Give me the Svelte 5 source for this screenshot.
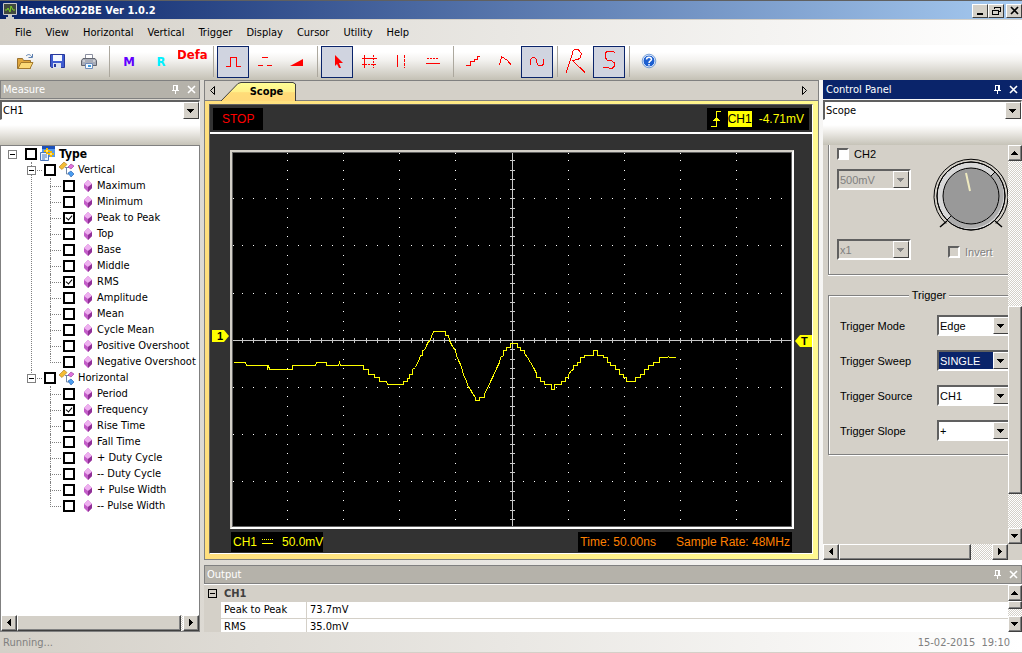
<script>
    let channel = $state("CH1");
    let panel = $state("Scope");

    const menus = ["File", "View", "Horizontal", "Vertical", "Trigger", "Display", "Cursor", "Utility", "Help"];

    const tools = [
        {id: "open"}, {id: "save"}, {id: "print"}, {id: "sep"},
        {id: "math"}, {id: "ref"}, {id: "default"}, {id: "sep"},
        {id: "pulse", active: true}, {id: "dash"}, {id: "ramp"}, {id: "sep"},
        {id: "arrow", active: true}, {id: "cross"}, {id: "vert"}, {id: "horz"}, {id: "sep"},
        {id: "step"}, {id: "linear"}, {id: "sine", active: true}, {id: "sep"},
        {id: "run"}, {id: "single", active: true}, {id: "sep"},
        {id: "help"}
    ];

    let groups = $state([
        {
            name: "Vertical",
            items: [
                {name: "Maximum", on: false},
                {name: "Minimum", on: false},
                {name: "Peak to Peak", on: true},
                {name: "Top", on: false},
                {name: "Base", on: false},
                {name: "Middle", on: false},
                {name: "RMS", on: true},
                {name: "Amplitude", on: false},
                {name: "Mean", on: false},
                {name: "Cycle Mean", on: false},
                {name: "Positive Overshoot", on: false},
                {name: "Negative Overshoot", on: false}
            ]
        },
        {
            name: "Horizontal",
            items: [
                {name: "Period", on: false},
                {name: "Frequency", on: true},
                {name: "Rise Time", on: false},
                {name: "Fall Time", on: false},
                {name: "+ Duty Cycle", on: false},
                {name: "-- Duty Cycle", on: false},
                {name: "+ Pulse Width", on: false},
                {name: "-- Pulse Width", on: false}
            ]
        }
    ]);

    const triggers = [
        {id: "mode", label: "Trigger Mode", value: "Edge"},
        {id: "sweep", label: "Trigger Sweep", value: "SINGLE", focus: true},
        {id: "source", label: "Trigger Source", value: "CH1"},
        {id: "slope", label: "Trigger Slope", value: "+"}
    ];

    const results = [
        ["Peak to Peak", "73.7mV"],
        ["RMS", "35.0mV"]
    ];

    // graticule: 10 x 8 divisions, 5 ticks each
    const gx = (k) => Math.round(11.22 * k - 1);
    const gy = (k) => Math.round(9.44 * k - 1);

    function buildDots(){
        let d = "";
        for(let c = 5; c < 50; c += 5){
            for(let k = 0; k < 40; k++){
                d += `M${gx(c)} ${Math.max(gy(k), 1)}h1v1h-1z`;
            }
        }
        for(let r = 5; r < 40; r += 5){
            for(let k = 0; k < 50; k++){
                d += `M${Math.max(gx(k), 1)} ${gy(r)}h1v1h-1z`;
            }
        }
        return d;
    }

    function buildAxes(){
        let d = `M1 ${gy(20)}h558v1h-558zM${gx(25)} 1h1v373h-1z`;
        for(let k = 1; k < 50; k++){
            d += `M${gx(k)} ${gy(20) - 2}h1v5h-1z`;
        }
        for(let k = 1; k < 40; k++){
            d += `M${gx(25) - 2} ${gy(k)}h5v1h-5z`;
        }
        return d;
    }

    const dots = buildDots();
    const axes = buildAxes();

    const wave = "1,210 13,210 14,213 35,213 35,217 36,213 37,217 60,217 60,213 83,213 84,210 94,210 94,213 106,213 107,210 108,213 131,213 131,217 "
        + "136,217 136,222 142,222 142,225 147,225 147,229 154,229 155,232 171,232 171,229 175,229 175,226 177,226 177,222 180,222 180,217 "
        + "183,215 185,210 187,207 188,203 190,203 190,198 193,197 194,193 196,189 198,188 199,184 201,179 213,179 213,183 216,183 "
        + "217,188 220,194 223,198 224,203 226,208 228,212 230,218 231,223 234,228 235,233 238,237 240,241 243,245 243,248 247,248 "
        + "247,245 252,245 252,241 255,236 258,229 261,223 264,216 267,210 268,205 271,203 271,198 274,198 274,195 278,195 278,191 "
        + "285,191 285,195 288,195 288,198 292,198 292,201 295,205 298,210 301,215 304,221 304,225 308,225 308,229 312,229 312,232 "
        + "319,232 319,237 322,237 322,232 329,232 329,229 333,229 333,225 336,225 336,222 339,218 341,217 341,213 345,213 345,210 "
        + "348,210 348,205 352,205 352,203 361,203 361,198 365,198 365,203 371,203 371,205 375,205 375,210 378,210 378,213 383,213 "
        + "383,217 387,217 387,222 391,222 391,225 394,225 394,229 403,229 403,225 408,225 408,222 412,222 412,217 416,217 416,213 "
        + "421,213 421,210 427,210 427,205 435,205 436,204 437,205 443,205";
</script>

{#snippet arrow(dir)}
    <svg class="tri" width="8" height="8" viewBox="0 0 8 8" shape-rendering="crispEdges">
        {#if dir === "up"}<path d="M0 6h7v-1h-1v-1h-1v-1h-1v-1h-1v1h-1v1h-1v1h-1z"/>
        {:else if dir === "down"}<path d="M0 2h7v1h-1v1h-1v1h-1v1h-1v-1h-1v-1h-1v-1h-1z"/>
        {:else if dir === "left"}<path d="M6 0v7h-1v-1h-1v-1h-1v-1h-1v-1h1v-1h1v-1h1v-1z"/>
        {:else}<path d="M2 0v7h1v-1h1v-1h1v-1h1v-1h-1v-1h-1v-1h-1v-1z"/>{/if}
    </svg>
{/snippet}

{#snippet paneButtons()}
    <button class="pane-btn" aria-label="Pin">
        <svg width="9" height="9" viewBox="0 0 9 9" fill="currentColor" shape-rendering="crispEdges"><path d="M2 0h5v5h1v1h-3v3h-1v-3h-3v-1h1zM3 1v4h2v-4z" fill-rule="evenodd"/></svg>
    </button>
    <button class="pane-btn" aria-label="Close">
        <svg width="9" height="9" viewBox="0 0 9 9" stroke="currentColor" stroke-width="1.6"><path d="M1 1l7 7M8 1l-7 7"/></svg>
    </button>
{/snippet}

{#snippet icon(id)}
    <svg width="32" height="32" viewBox="0 0 32 32" fill="none" stroke="#f00">
        {#if id === "open"}
            <path d="M8.500 12.500h5l1 2h7v8h-13z" fill="#e0a63c" stroke="#9a7230"/>
            <path d="M9 22.500l3-6h12l-3 6z" fill="#fbd977" stroke="#a57a2c"/>
            <path d="M17 10c2-2 4-2 6 1M23.500 8v3.500h-4" stroke="#5b7fb0"/>
        {:else if id === "save"}
            <path d="M9.500 8.500h14v13h-13l-1-1z" fill="#3f5cd0" stroke="#27379a"/>
            <path d="M12 9h9v6h-9z" fill="#f4f8ff" stroke="none"/>
            <path d="M12 17h8v5h-8z" fill="#dce2ee" stroke="none"/>
            <path d="M13 18h2v3h-2z" fill="#27379a" stroke="none"/>
        {:else if id === "print"}
            <path d="M12.500 8.500h7v5h-7z" fill="#fff" stroke="#8a8fa0"/>
            <path d="M10 12.500h12l1.500 2v5h-15v-5z" fill="#a9adb8" stroke="#62656f"/>
            <path d="M10 15h2M20 15h2" stroke="#eee"/>
            <path d="M12.500 17.500h7v5h-7z" fill="#f4faff" stroke="#708cb8"/>
            <path d="M15 19h3v2h-3z" fill="#3f9be0" stroke="none"/>
        {:else if id === "pulse"}
            <path d="M9 20.500H13.500V11.500H19.500V20.500H24" shape-rendering="crispEdges"/>
        {:else if id === "dash"}
            <path d="M9 19.500h5M13 11.500h6M18 19.500h5" shape-rendering="crispEdges"/>
        {:else if id === "ramp"}
            <path d="M9 20L22 13V20z" fill="#f00" stroke="none"/>
        {:else if id === "arrow"}
            <path d="M14 9v11l2-2 2 4h2l-2-5h4z" fill="#f00" stroke="none"/>
        {:else if id === "cross"}
            <path d="M9 12.500h15M11.500 9v13" shape-rendering="crispEdges"/>
            <path d="M9 18.500h15M20.500 9v13" stroke-dasharray="2 1" shape-rendering="crispEdges"/>
        {:else if id === "vert"}
            <path d="M12.500 9v12" shape-rendering="crispEdges"/>
            <path d="M19.500 9v13" stroke-dasharray="3 1" shape-rendering="crispEdges"/>
        {:else if id === "horz"}
            <path d="M10 12.500h12" stroke-dasharray="2 1" shape-rendering="crispEdges"/>
            <path d="M9 17.500h14" shape-rendering="crispEdges"/>
        {:else if id === "step"}
            <path d="M9 19.500H13.500V15.500H17.500V13.500H20.500V10.500H23" shape-rendering="crispEdges"/>
        {:else if id === "linear"}
            <path d="M10.500 19.500L12.500 10.500L18.500 14.500L22.500 19.500" shape-rendering="crispEdges"/>
        {:else if id === "sine"}
            <path d="M9.500 19V13.500L11.500 11.500H13.500L15.500 13.500V16.500L17.500 19.500H21.500L22.500 17.500V13" shape-rendering="crispEdges"/>
        {:else if id === "run"}
            <path d="M5 26.500L10.500 11L12 5L14 3.500H17L20.500 7.500L19 12L17 13.500L11.500 14.500L24 26.500" shape-rendering="crispEdges"/>
        {:else if id === "single"}
            <path d="M22.500 6.500L20 5.500H14L12.500 7V12L14.500 14.500L19 15L21.500 17V20L19.500 22H16L10 21.500" shape-rendering="crispEdges"/>
        {:else if id === "help"}
            <circle cx="16" cy="15" r="6" fill="#1d5fd0" stroke="#e6f0ff"/>
            <circle cx="16" cy="15" r="6.800" stroke="#5b8dd0" stroke-width=".8"/>
            <path d="M13.500 13.500c0-3 5-3 5 0c0 1.500-2.500 1.500-2.500 3.500M16 18v1.500" stroke="#fff" stroke-width="1.500"/>
        {/if}
    </svg>
{/snippet}

<div class="app">
    <header class="title">
        <svg width="14" height="17" viewBox="0 0 14 17">
            <path d="M.5 1.500h13v11H.5z" fill="#40483f" stroke="#c8c8c8"/>
            <path d="M2 8h2l1-2 2 4 1-6 2 4h2" fill="none" stroke="#7bd025"/>
            <path d="M5 13h4v2h2v2H3v-2h2z" fill="#c8c8c8"/>
        </svg>
        <h1>Hantek6022BE Ver 1.0.2</h1>
        <div class="win-btns">
            <button aria-label="Minimize"><svg width="11" height="10" shape-rendering="crispEdges"><path d="M2 7h6v2h-6z"/></svg></button>
            <button aria-label="Restore"><svg width="11" height="10" fill="none" stroke="#000" shape-rendering="crispEdges"><path d="M3.500 3V1.500h6v4H8M3 1h7M1.500 4.500h6v4h-6zM1 4h7"/></svg></button>
            <button class="close" aria-label="Close"><svg width="11" height="10" stroke="#000" stroke-width="1.700"><path d="M2 1l7 7M9 1l-7 7"/></svg></button>
        </div>
    </header>

    <nav class="menu">
        {#each menus as item}
            <button>{item}</button>
        {/each}
    </nav>

    <div class="toolbar">
        {#each tools as tool}
            {#if tool.id === "sep"}
                <span class="sep"></span>
            {:else}
                <button class="tool" class:active={tool.active} aria-label={tool.id}>
                    {#if tool.id === "math"}<b class="math">M</b>
                    {:else if tool.id === "ref"}<b class="ref">R</b>
                    {:else if tool.id === "default"}<b class="default">Default</b>
                    {:else}{@render icon(tool.id)}{/if}
                </button>
            {/if}
        {/each}
    </div>

    <main>
        <section class="measure">
            <div class="pane-head"><h2>Measure</h2>{@render paneButtons()}</div>
            <div class="combo wide">
                <select aria-label="Measure channel" bind:value={channel}>
                    <option>CH1</option>
                    <option>CH2</option>
                </select>
                <span class="drop">{@render arrow("down")}</span>
            </div>
            <div class="strip"></div>
            <div class="tree-box">
                <ul class="tree">
                    <li>
                        <div class="row">
                            <button class="exp" aria-label="Collapse"></button>
                            <label>
                                <input type="checkbox">
                                <svg width="16" height="16" viewBox="0 0 16 16">
                                    <path d="M2 1h13v10H2z" fill="#5a9be8"/><path d="M2 0h13v3H2z" fill="#1c50b8"/>
                                    <path d="M.5 6.500h8v8h-8z" fill="#eaf3ff" stroke="#4a78c0"/>
                                    <path d="M2 9h5M2 11h5M2 13h3" stroke="#4a78c0"/>
                                    <path d="M7 2v6M4 5h6M11 5v6M8 8h6" stroke="#f5b800" stroke-width="2"/>
                                    <path d="M7 4v2M6 5h2M11 7v2M10 8h2" stroke="#fff3a0"/>
                                </svg>
                                <b>Type</b>
                            </label>
                        </div>
                        <ul>
                            {#each groups as group}
                                <li>
                                    <div class="row">
                                        <button class="exp" aria-label="Collapse"></button>
                                        <label>
                                            <input type="checkbox">
                                            <svg width="16" height="16" viewBox="0 0 16 16">
                                                <path d="M6 5.500h4M7.500 6v6h3" fill="none" stroke="#7088a8"/>
                                                <path d="M0 5l5-5 3 2.500-5 5z" fill="#f3bd35" stroke="#a8761c" stroke-width=".6"/>
                                                <path d="M9 5l3-3 3 2-3 3z" fill="#e070dc" stroke="#903c96" stroke-width=".6"/>
                                                <path d="M9 11l3-2 3 3-3 3z" fill="#4a9df0" stroke="#2058a8" stroke-width=".6"/>
                                            </svg>
                                            <span>{group.name}</span>
                                        </label>
                                    </div>
                                    <ul>
                                        {#each group.items as item}
                                            <li>
                                                <div class="row leaf">
                                                    <label>
                                                        <input type="checkbox" bind:checked={item.on}>
                                                        <svg width="16" height="16" viewBox="0 0 16 16">
                                                            <path d="M10 2l4 4v4l-4 4-4-4V6z" fill="#c35cc8"/>
                                                            <path d="M10 2l4 4-4 3-4-3z" fill="#eeb0f0"/>
                                                            <path d="M10 9l4-3v4l-4 4z" fill="#8f3096"/>
                                                        </svg>
                                                        <span>{item.name}</span>
                                                    </label>
                                                </div>
                                            </li>
                                        {/each}
                                    </ul>
                                </li>
                            {/each}
                        </ul>
                    </li>
                </ul>
                <div class="hscroll">
                    <button aria-label="Scroll left">{@render arrow("left")}</button>
                    <span class="thumb full"></span>
                    <button aria-label="Scroll right">{@render arrow("right")}</button>
                </div>
            </div>
        </section>

        <div class="right">
            <div class="upper">
                <section class="scope">
                    <div class="tabs">
                        <button class="tab-nav" aria-label="Previous tab"><svg width="5" height="9" fill="none" stroke="#000"><path d="M4.500 .5v8l-4-4z"/></svg></button>
                        <button class="tab">
                            <svg width="75" height="20" viewBox="0 0 75 20">
                                <defs>
                                    <linearGradient id="tabfill" x1="0" y1="0" x2="0" y2="1">
                                        <stop offset="0" stop-color="#ffff96"/>
                                        <stop offset=".5" stop-color="#fff08a"/>
                                        <stop offset=".55" stop-color="#ffdc78"/>
                                        <stop offset="1" stop-color="#ffd878"/>
                                    </linearGradient>
                                </defs>
                                <path d="M0 20L17 2.500L20 1.500H72L74.500 3V20" fill="url(#tabfill)" stroke="#404040"/>
                            </svg>
                            <b>Scope</b>
                        </button>
                        <button class="tab-nav next" aria-label="Next tab"><svg width="5" height="9" fill="none" stroke="#000"><path d="M.5 .5v8l4-4z"/></svg></button>
                    </div>
                    <div class="frame">
                        <div class="screen">
                            <div class="scope-top">
                                <span class="box stop">STOP</span>
                                <span class="box trig">
                                    <svg width="10" height="18" viewBox="0 0 10 18" fill="none" stroke="#ff0" shape-rendering="crispEdges"><path d="M0 16.500h5.500V1.500h4.500"/><path d="M5 7h1l3 4H2z" fill="#ff0" stroke="none"/></svg>
                                    <mark>CH1</mark>
                                    <span>-4.71mV</span>
                                </span>
                            </div>
                            <div class="plot-row">
                                <svg class="flag" width="17" height="12" viewBox="0 0 17 12"><path d="M0 0h12l5 6-5 6H0z" fill="#ff0"/><text x="5" y="10">1</text></svg>
                                <div class="plot">
                                    <svg viewBox="0 0 560 375" preserveAspectRatio="none" shape-rendering="crispEdges">
                                        <rect x=".5" y=".5" width="559" height="374" fill="#000" stroke="#606060"/>
                                        <path d={dots} fill="#fff"/>
                                        <path d={axes} fill="#c8c8c8"/>
                                        <polyline points={wave} transform="translate(.5 .5)" fill="none" stroke="#ff0"/>
                                    </svg>
                                </div>
                                <svg class="flag level" width="17" height="12" viewBox="0 0 17 12"><path d="M17 0H5L0 6l5 6h12z" fill="#ff0"/><text x="6" y="10">T</text></svg>
                            </div>
                            <div class="scope-foot">
                                <span class="box ch"><span>CH1</span>
                                    <svg width="11" height="6" stroke="#ff0" shape-rendering="crispEdges"><path d="M0 .5h11" stroke-dasharray="1 1"/><path d="M0 4.500h11"/></svg>
                                    <span class="val">50.0mV</span></span>
                                <span class="box time"><span>Time: 50.00ns</span><span>Sample Rate: 48MHz</span></span>
                            </div>
                        </div>
                    </div>
                </section>

                <section class="control">
                    <div class="pane-head navy"><h2>Control Panel</h2>{@render paneButtons()}</div>
                    <div class="combo wide">
                        <select aria-label="Panel" bind:value={panel}>
                            <option>Scope</option>
                        </select>
                        <span class="drop">{@render arrow("down")}</span>
                    </div>
                    <div class="strip"></div>
                    <div class="control-body">
                        <div class="form">
                            <div class="channel">
                                <div class="chan-left">
                                    <label class="chk"><input type="checkbox"><span>CH2</span></label>
                                    <div class="combo off">
                                        <select aria-label="Volts per division" disabled><option>500mV</option></select>
                                        <span class="drop">{@render arrow("down")}</span>
                                    </div>
                                    <div class="combo off probe">
                                        <select aria-label="Probe" disabled><option>x1</option></select>
                                        <span class="drop">{@render arrow("down")}</span>
                                    </div>
                                </div>
                                <div class="chan-right">
                                    <svg width="76" height="76" viewBox="0 0 76 76" fill="none" stroke="#000">
                                        <circle cx="38" cy="38" r="34" fill="#d8d8d8"/>
                                        <path d="M62 14A34 34 0 0 1 14 62L18 58A28 28 0 0 0 58 18z" fill="#acacac" stroke="none"/>
                                        <circle cx="38" cy="38" r="34"/>
                                        <path d="M13 65.500A37 37 0 1 1 63 65.500"/>
                                        <path d="M14 62l4-4M58 18l4-4"/>
                                        <path d="M7 69l7-6M69 69l-7-6" stroke-width="1.500"/>
                                        <circle cx="38" cy="38" r="28" fill="#999"/>
                                        <path d="M33 15l4 18" stroke="#efeac0" stroke-width="2"/>
                                    </svg>
                                    <label class="chk off"><input type="checkbox" disabled><span>Invert</span></label>
                                </div>
                            </div>
                            <fieldset>
                                <legend>Trigger</legend>
                                {#each triggers as t}
                                    <div class="field">
                                        <label for={t.id}>{t.label}</label>
                                        <div class="combo" class:focus={t.focus}>
                                            <select id={t.id}><option>{t.value}</option></select>
                                            <span class="drop">{@render arrow("down")}</span>
                                        </div>
                                    </div>
                                {/each}
                            </fieldset>
                        </div>
                        <div class="vscroll">
                            <button aria-label="Scroll up">{@render arrow("up")}</button>
                            <span class="thumb"></span>
                            <button aria-label="Scroll down">{@render arrow("down")}</button>
                        </div>
                        <div class="hscroll">
                            <button aria-label="Scroll left">{@render arrow("left")}</button>
                            <span class="thumb"></span>
                            <button aria-label="Scroll right">{@render arrow("right")}</button>
                        </div>
                        <span class="corner"></span>
                    </div>
                </section>
            </div>

            <section class="output">
                <div class="pane-head"><h2>Output</h2>{@render paneButtons()}</div>
                <div class="output-body">
                    <div class="grid">
                        <div class="cat"><button class="exp dark" aria-label="Collapse"></button><b>CH1</b></div>
                        <table>
                            <tbody>
                                {#each results as [name, value]}
                                    <tr><th scope="row">{name}</th><td>{value}</td></tr>
                                {/each}
                            </tbody>
                        </table>
                    </div>
                    <div class="vscroll">
                        <button aria-label="Scroll up">{@render arrow("up")}</button>
                        <span class="thumb small"></span>
                        <button aria-label="Scroll down">{@render arrow("down")}</button>
                    </div>
                </div>
            </section>
        </div>
    </main>

    <footer>
        <span>Running...</span>
        <span>15-02-2015&nbsp; 19:10</span>
    </footer>
</div>

<style>
    :global(body){
        margin: 0;
        background: #d4d0c8;
    }
    .app{
        min-height: 100vh;
        display: flex;
        flex-direction: column;
        font: 11px/16px Tahoma, "DejaVu Sans Condensed", "DejaVu Sans", sans-serif;
        color: #000;
        background: linear-gradient(90deg, #d4d0c8, #fff);
        overflow: hidden;
    }
    .app *{
        box-sizing: border-box;
    }
    h1, h2, ul{
        margin: 0;
        padding: 0;
        list-style: none;
    }
    button, select{
        margin: 0;
        padding: 0;
        border: 0;
        border-radius: 0;
        background: none;
        font: inherit;
        color: inherit;
    }
    svg{
        display: block;
        flex: none;
    }

    .title{
        height: 20px;
        display: flex;
        align-items: center;
        gap: 3px;
        padding: 1px 0 0 3px;
        border-top: 1px solid #606060;
        border-bottom: 1px solid #d4d0c8;
        background: linear-gradient(90deg, #0a246a, #a6caf0);
    }
    h1{
        font-size: 11px;
        color: #fff;
    }
    .win-btns{
        margin-left: auto;
        display: flex;
    }
    .win-btns button{
        width: 16px;
        height: 14px;
        display: flex;
        align-items: center;
        justify-content: center;
        background: #d4d0c8;
        border: 1px solid;
        border-color: #fff #404040 #404040 #fff;
    }
    .win-btns .close{
        margin-left: 2px;
    }
    .menu{
        height: 25px;
        display: flex;
        align-items: center;
        gap: 14px;
        padding-left: 15px;
        background: linear-gradient(90deg, #d4d0c8, #fff);
    }
    .toolbar{
        height: 35px;
        display: flex;
        align-items: flex-start;
        padding: 1px 0 0 9px;
        background: linear-gradient(#fff 20%, #f2f1ee 45%, #c4c1b5);
    }
    .tool{
        width: 32px;
        height: 32px;
        overflow: hidden;
        border: 1px solid transparent;
        display: flex;
        align-items: center;
        justify-content: center;
    }
    .tool.active{
        background: #d0d4e0;
        border-color: #0a246a;
    }
    .tool b{
        font-size: 13px;
    }
    .math{
        color: #6000ff;
    }
    .ref{
        color: #00f0ff;
    }
    .default{
        width: 32px;
        flex: none;
        align-self: flex-start;
        color: #f00;
        overflow: hidden;
        text-align: left;
    }
    .sep{
        width: 8px;
        height: 31px;
        background: linear-gradient(#aca89e, #aca89e) 4px 0 / 1px 100% no-repeat;
    }

    main{
        flex: 1;
        display: flex;
        gap: 4px;
    }
    .measure{
        width: 200px;
        flex: none;
        display: flex;
        flex-direction: column;
    }
    .right{
        flex: 1;
        min-width: 0;
        display: flex;
        flex-direction: column;
        gap: 5px;
    }
    .upper{
        flex: 1;
        display: flex;
        gap: 4px;
    }
    .pane-head{
        height: 19px;
        display: flex;
        align-items: center;
        gap: 7px;
        padding: 0 3px 0 2px;
        color: #fff;
        background: #b5b2aa;
        border: 1px solid #808080;
    }
    .pane-head.navy{
        background: #0a246a;
        border-color: #0a246a;
    }
    h2{
        flex: 1;
        font-size: 11px;
        font-weight: normal;
    }
    .pane-btn{
        display: flex;
    }

    .combo{
        position: relative;
        height: 21px;
        background: #fff;
        border: 2px solid;
        border-color: #606060 #fff #fff #606060;
    }
    .combo.wide{
        height: 20px;
        margin-top: 1px;
        border-width: 2px 1px 1px 2px;
    }
    .combo select{
        display: block;
        width: 100%;
        height: 100%;
        padding: 0 17px 0 1px;
        appearance: none;
    }
    .drop{
        position: absolute;
        top: 0;
        right: 0;
        bottom: 0;
        width: 16px;
        display: flex;
        align-items: center;
        justify-content: center;
        background: #d4d0c8;
        border: 1px solid;
        border-color: #fff #404040 #404040 #fff;
        pointer-events: none;
    }
    .combo.off{
        background: #d4d0c8;
        color: #808080;
        fill: #808080;
    }
    .combo.off select{
        opacity: 1;
        color: #808080;
    }
    .combo.focus select{
        color: #fff;
        background: #0a246a;
    }
    .strip{
        height: 25px;
        background: linear-gradient(#fff 20%, #f0eeea 45%, #c6c3b8);
    }

    .tree-box{
        flex: 1;
        display: flex;
        flex-direction: column;
        justify-content: space-between;
        background: #fff;
        border: 1px solid #808080;
    }
    .tree ul{
        margin-left: 19px;
    }
    .tree li li{
        position: relative;
    }
    .tree li li::before{
        content: "";
        position: absolute;
        left: 11px;
        top: 0;
        height: 100%;
        border-left: 1px dotted #808080;
    }
    .tree li li:last-child::before{
        height: 9px;
    }
    .tree li li::after{
        content: "";
        position: absolute;
        left: 11px;
        top: 8px;
        width: 11px;
        border-top: 1px dotted #808080;
    }
    .row{
        height: 16px;
        display: flex;
        align-items: center;
        gap: 8px;
        padding-left: 7px;
        white-space: nowrap;
    }
    .row.leaf{
        padding-left: 24px;
    }
    .row label{
        display: flex;
        align-items: center;
        gap: 3px;
    }
    .row b{
        font-size: 12px;
    }
    .exp{
        position: relative;
        z-index: 1;
        width: 9px;
        height: 9px;
        flex: none;
        border: 1px solid #808080;
        background: linear-gradient(#000, #000) center / 5px 1px no-repeat #fff;
    }
    .exp.dark{
        border-color: #000;
        background-color: #d4d0c8;
    }
    input[type="checkbox"]{
        appearance: none;
        width: 12px;
        height: 12px;
        flex: none;
        margin: 0;
        border: 2px solid #000;
        background: #fff;
        position: relative;
    }
    input[type="checkbox"]:checked::after{
        content: "";
        position: absolute;
        left: 1px;
        top: 1px;
        width: 5px;
        height: 3px;
        border: solid #000;
        border-width: 0 0 1px 1px;
        transform: rotate(-50deg);
    }

    .hscroll, .vscroll{
        display: flex;
        background: repeating-conic-gradient(#fff 0 25%, #d4d0c8 0 50%) 0 0 / 2px 2px;
    }
    .hscroll{
        height: 16px;
    }
    .vscroll{
        width: 14px;
        flex-direction: column;
    }
    .hscroll button, .vscroll button, .thumb{
        flex: none;
        display: flex;
        align-items: center;
        justify-content: center;
        background: #d4d0c8;
        border: 1px solid;
        border-color: #fff #404040 #404040 #fff;
        box-shadow: inset -1px -1px #808080;
    }
    .hscroll button{
        width: 16px;
    }
    .vscroll button{
        height: 16px;
    }
    .hscroll .thumb{
        width: 132px;
        margin-right: auto;
    }
    .hscroll .thumb.full{
        flex: 1;
        margin-right: 2px;
    }

    .scope{
        flex: 1;
        min-width: 0;
        display: flex;
        flex-direction: column;
    }
    .tabs{
        height: 21px;
        display: flex;
        align-items: center;
        padding: 0 11px 0 5px;
        background: #d4d0c8;
        border: 1px solid #808080;
    }
    .tab-nav{
        display: flex;
    }
    .tab-nav.next{
        margin-left: auto;
    }
    .tab{
        display: grid;
        align-items: center;
        margin-left: 6px;
    }
    .tab svg, .tab b{
        grid-area: 1 / 1;
    }
    .tab b{
        padding: 2px 0 0 16px;
    }
    .frame{
        flex: 1;
        display: flex;
        padding: 3px 5px 5px 4px;
        background: linear-gradient(90deg, #ffdf7d, #fff990);
        border: 1px solid #808080;
        border-top: 0;
    }
    .screen{
        flex: 1;
        display: flex;
        flex-direction: column;
        background: #323232;
        border: 1px solid;
        border-color: #606060 #fff #fff #606060;
        font: 12px/16px "Liberation Sans", Arial, sans-serif;
    }
    .scope-top{
        height: 29px;
        display: flex;
        justify-content: space-between;
        align-items: center;
        padding: 0 3px;
        border-bottom: 2px solid #fff;
    }
    .box{
        height: 20px;
        display: flex;
        align-items: center;
        background: #000;
    }
    .scope-top .box{
        height: 22px;
    }
    .stop{
        padding: 0 9px;
        color: #f00;
    }
    .trig{
        gap: 7px;
        padding: 0 5px 0 4px;
        color: #ff0;
    }
    mark{
        color: #000;
        background: #ff0;
    }
    .plot-row{
        flex: 1;
        display: flex;
        align-items: center;
        gap: 1px;
        padding: 16px 0 0 2px;
    }
    .plot{
        flex: 1;
        align-self: stretch;
        border: 2px solid;
        border-color: #d4d0c8 #fff #fff #d4d0c8;
        position: relative;
    }
    .plot svg{
        position: absolute;
        inset: 0;
        width: 100%;
        height: 100%;
    }
    .flag{
        margin-bottom: 8px;
    }
    .flag.level{
        margin: 2px 0 0;
    }
    .flag text{
        font-size: 11px;
        font-weight: bold;
    }
    .scope-foot{
        display: flex;
        justify-content: space-between;
        padding: 3px 20px 1px 21px;
    }
    .ch{
        gap: 5px;
        padding: 0 0 0 2px;
        color: #ff0;
    }
    .val{
        padding-left: 4px;
    }
    .time{
        gap: 20px;
        padding: 0 2px;
        color: #ff8000;
    }

    .control{
        width: 199px;
        flex: none;
        display: flex;
        flex-direction: column;
    }
    .control-body{
        flex: 1;
        display: grid;
        grid-template-columns: minmax(0, 1fr) 14px;
        grid-template-rows: 1fr 16px;
        background: #d4d0c8;
    }
    .form{
        overflow: hidden;
        padding-left: 5px;
        font-family: "Liberation Sans", Arial, sans-serif;
    }
    .control .vscroll .thumb{
        flex: 0 0 47%;
        margin: auto 0 34px;
    }
    .channel{
        width: 202px;
        height: 130px;
        display: flex;
        gap: 22px;
        padding: 1px 8px;
        border: solid #808080;
        border-width: 0 1px 1px;
        box-shadow: 0 1px #fff, inset 1px 0 #fff;
    }
    .chan-left{
        width: 74px;
        flex: none;
        display: flex;
        flex-direction: column;
    }
    .chan-left .combo{
        margin-top: 7px;
    }
    .chan-left .combo.probe{
        margin-top: 49px;
    }
    .chan-right{
        display: flex;
        flex-direction: column;
        gap: 10px;
        padding-top: 12px;
    }
    .chk{
        display: flex;
        align-items: center;
        gap: 5px;
    }
    .chk input[type="checkbox"]{
        border-color: #606060 #fff #fff #606060;
    }
    .chk.off{
        padding-left: 15px;
        color: #808080;
        text-shadow: 1px 1px #fff;
    }
    .chk.off input{
        background: #d4d0c8;
    }
    fieldset{
        width: 202px;
        min-width: 0;
        height: 168px;
        margin: 12px 0 0;
        padding: 12px 11px 0;
        border: 1px solid #808080;
        box-shadow: 1px 1px #fff, inset 1px 1px #fff;
    }
    legend{
        margin: 0 auto;
        padding: 0 3px;
        background: #d4d0c8;
    }
    .field{
        display: flex;
        align-items: center;
        justify-content: space-between;
        height: 21px;
        margin-bottom: 14px;
        padding-right: 7px;
    }
    .field .combo{
        width: 74px;
    }

    .output-body{
        height: 48px;
        display: flex;
        background: #d4d0c8;
        border-top: 1px solid #fff;
    }
    .grid{
        flex: 1;
        overflow: hidden;
    }
    .cat{
        height: 17px;
        display: flex;
        align-items: center;
        gap: 7px;
        padding-left: 4px;
        color: #404040;
    }
    table{
        width: 100%;
        padding-left: 17px;
        border-spacing: 0;
    }
    th, td{
        height: 17px;
        padding: 0 3px;
        line-height: 16px;
        text-align: left;
        font-weight: normal;
        background: #fff;
        border-bottom: 1px solid #d4d0c8;
    }
    th{
        width: 86px;
        border-right: 1px solid #d4d0c8;
    }
    .thumb.small{
        height: 8px;
        margin-bottom: auto;
    }

    footer{
        height: 21px;
        display: flex;
        align-items: center;
        justify-content: space-between;
        padding: 2px 12px 0 3px;
        color: #808080;
        border-bottom: 1px solid #d4d0c8;
        background: linear-gradient(90deg, #d4d0c8, #fff);
    }
</style>
